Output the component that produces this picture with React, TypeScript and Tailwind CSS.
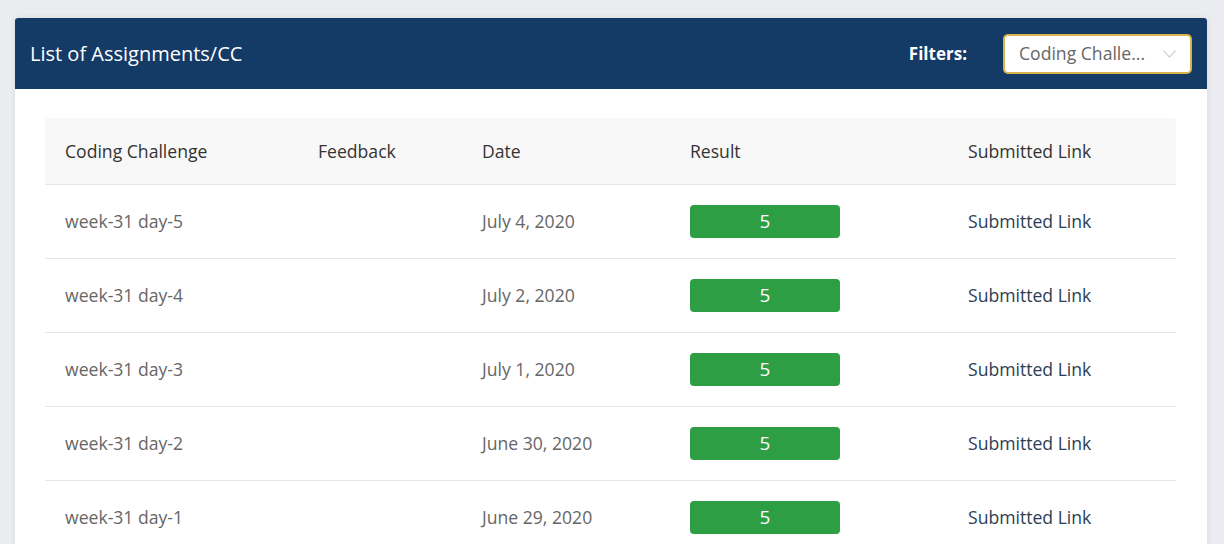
type Row = { name: string; date: string; result: number };

const ROWS: Row[] = [
  { name: 'week-31 day-5', date: 'July 4, 2020', result: 5 },
  { name: 'week-31 day-4', date: 'July 2, 2020', result: 5 },
  { name: 'week-31 day-3', date: 'July 1, 2020', result: 5 },
  { name: 'week-31 day-2', date: 'June 30, 2020', result: 5 },
  { name: 'week-31 day-1', date: 'June 29, 2020', result: 5 },
];

const COLS = 'grid grid-cols-[253px_164px_208px_278px_1fr]';

export default function App() {
  return (
    <div
      className="min-h-screen bg-[#ebecf0] pl-[15px] pr-[17px] pt-[18px] overflow-hidden"
      style={{ fontFamily: '"Open Sans", "Noto Sans", sans-serif' }}
    >
      <div className="bg-white rounded-t-[3px] shadow-[0_0_6px_rgba(0,0,0,0.08)]">
        <header className="h-[71px] bg-[#143a66] rounded-t-[3px] flex items-center justify-between pl-[15px] pr-[15px]">
          <h1 className="text-white text-[20px] leading-none">List of Assignments/CC</h1>
          <div className="flex items-center gap-[36px]">
            <span className="text-white text-[17px] font-bold">Filters:</span>
            <div className="w-[189px] h-[40px] bg-white rounded-[5px] border-2 border-[#d9b44a] flex items-center justify-between pl-[14px] pr-[14px]">
              <span className="text-[#666] text-[17.6px] truncate">Coding Challe...</span>
              <svg width="13" height="8" viewBox="0 0 13 8" fill="none" className="shrink-0">
                <polyline points="0.5,0.5 6.5,7 12.5,0.5" stroke="#c4c4c4" strokeWidth="1.1" />
              </svg>
            </div>
          </div>
        </header>

        <div className="pl-[30px] pr-[31px] pt-[29px]">
          <div className={`${COLS} h-[67px] items-center bg-[#f8f8f8] border-b border-[#e6e6e6] text-[#333] text-[17.6px] rounded-t-[3px]`}>
            <div className="pl-[20px]">Coding Challenge</div>
            <div className="pl-[20px]">Feedback</div>
            <div className="pl-[20px]">Date</div>
            <div className="pl-[20px]">Result</div>
            <div className="pl-[20px]">Submitted Link</div>
          </div>
          {ROWS.map((r) => (
            <div key={r.name} className={`${COLS} h-[74px] items-center border-b border-[#e6e6e6] text-[17.6px]`}>
              <div className="pl-[20px] text-[#666]">{r.name}</div>
              <div className="pl-[20px]"></div>
              <div className="pl-[20px] text-[#666]">{r.date}</div>
              <div className="pl-[20px]">
                <div className="w-[150px] h-[33px] rounded-[4px] bg-[#2e9e45] text-white text-[19px] flex items-center justify-center">
                  {r.result}
                </div>
              </div>
              <div className="pl-[20px]">
                <a href="#" className="text-[#2c3e55]">Submitted Link</a>
              </div>
            </div>
          ))}
        </div>
      </div>
    </div>
  );
}
